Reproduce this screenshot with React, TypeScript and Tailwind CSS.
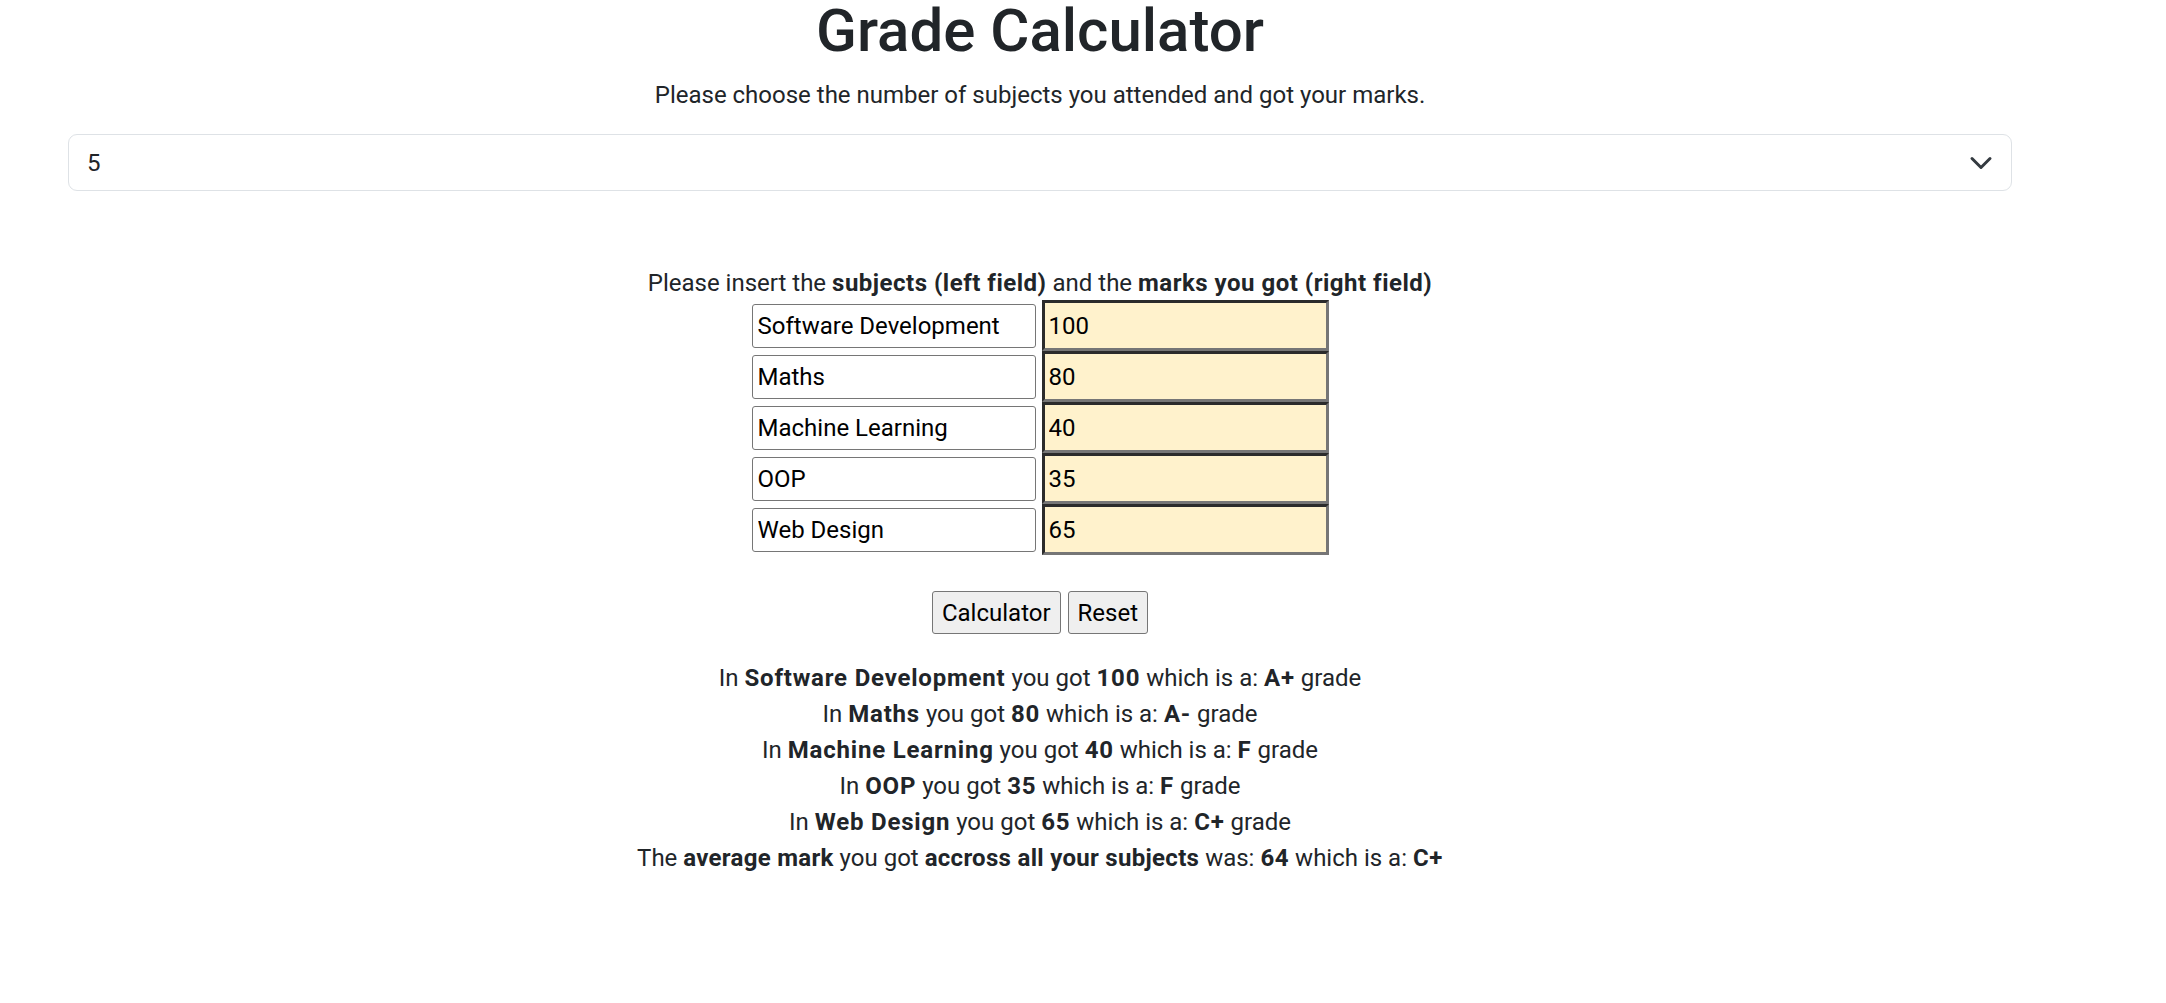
import { useState } from "react";

type Row = { subject: string; mark: string };

const initialRows: Row[] = [
  { subject: "Software Development", mark: "100" },
  { subject: "Maths", mark: "80" },
  { subject: "Machine Learning", mark: "40" },
  { subject: "OOP", mark: "35" },
  { subject: "Web Design", mark: "65" },
];

const gradeFor = (mark: number) => {
  if (mark >= 90) return "A+";
  if (mark >= 85) return "A";
  if (mark >= 80) return "A-";
  if (mark >= 75) return "B+";
  if (mark >= 70) return "B";
  if (mark >= 60) return "C+";
  if (mark >= 50) return "C";
  if (mark >= 45) return "D";
  return "F";
};

export default function App() {
  const [count, setCount] = useState("5");
  const [rows, setRows] = useState<Row[]>(initialRows);

  const update = (i: number, key: keyof Row, value: string) =>
    setRows((current) => current.map((r, idx) => (idx === i ? { ...r, [key]: value } : r)));

  const marks = rows.map((r) => Number(r.mark) || 0);
  const average = Math.round(marks.reduce((a, b) => a + b, 0) / Math.max(1, marks.length));

  return (
    <div className="min-h-screen bg-white font-['Roboto',sans-serif] text-[24px] leading-[36px] text-[#212529]">
      <div className="ml-[68px] w-[1944px] text-center">
        <h1 className="mb-[15px] text-[60px] font-medium leading-[62px]">Grade Calculator</h1>
        <p className="mb-[21px]">Please choose the number of subjects you attended and got your marks.</p>

        <div className="relative">
          <select
            value={count}
            onChange={(e) => setCount(e.target.value)}
            className="block h-[57px] w-full appearance-none rounded-[9px] border border-[#dee2e6] bg-white pl-[18px] pr-[54px] text-left text-[24px] text-[#212529] outline-none"
          >
            {[1, 2, 3, 4, 5, 6, 7, 8, 9, 10].map((n) => (
              <option key={n} value={n}>
                {n}
              </option>
            ))}
          </select>
          <svg
            className="pointer-events-none absolute right-[19px] top-1/2 h-[18px] w-[24px] -translate-y-1/2"
            viewBox="0 0 16 12"
            fill="none"
            stroke="#343a40"
            strokeWidth="2"
            strokeLinecap="round"
            strokeLinejoin="round"
          >
            <path d="m2 3 6 6 6-6" />
          </svg>
        </div>

        <p className="mt-[74px]">
          Please insert the <b className="tracking-[0.5px]">subjects (left field)</b> and the{" "}
          <b className="tracking-[0.5px]">marks you got (right field)</b>
        </p>

        <div className="-mt-[1px] flex flex-col items-center">
          {rows.map((r, i) => (
            <div key={i} className="flex h-[51px] items-center gap-[6px]">
              <input
                value={r.subject}
                onChange={(e) => update(i, "subject", e.target.value)}
                className="h-[44px] w-[284px] rounded-[3px] border border-[#767676] bg-white px-[5px] text-[24px] text-black outline-none"
              />
              <input
                value={r.mark}
                onChange={(e) => update(i, "mark", e.target.value)}
                className="h-[51px] w-[287px] border-[3px] border-b-[#767676] border-l-[#2b2b2b] border-r-[#767676] border-t-[#2b2b2b] bg-[#fff2cc] px-[4px] text-[24px] text-black outline-none"
              />
            </div>
          ))}
        </div>

        <div className="mt-[36px] flex justify-center gap-[7px]">
          <button
            type="button"
            className="h-[43px] rounded-[3px] border border-[#767676] bg-[#efefef] px-[9px] text-[24px] text-black"
          >
            Calculator
          </button>
          <button
            type="button"
            onClick={() => setRows(initialRows.map((r) => ({ subject: r.subject, mark: "" })))}
            className="h-[43px] rounded-[3px] border border-[#767676] bg-[#efefef] px-[9px] text-[24px] text-black"
          >
            Reset
          </button>
        </div>

        <div className="mt-[26px]">
          {rows.map((r, i) => (
            <p key={i}>
              In <b className="tracking-[0.8px]">{r.subject}</b> you got <b className="tracking-[0.8px]">{r.mark}</b>{" "}
              which is a: <b className="tracking-[0.8px]">{gradeFor(marks[i])}</b> grade
            </p>
          ))}
          <p>
            The <b className="tracking-[0.3px]">average mark</b> you got{" "}
            <b className="tracking-[0.3px]">accross all your subjects</b> was:{" "}
            <b className="tracking-[0.6px]">{average}</b> which is a:{" "}
            <b className="tracking-[0.6px]">{gradeFor(average)}</b>
          </p>
        </div>
      </div>
    </div>
  );
}
